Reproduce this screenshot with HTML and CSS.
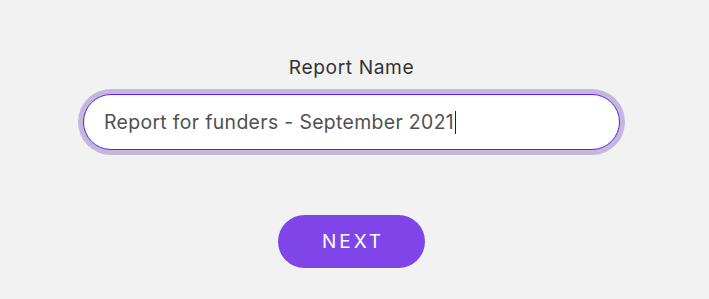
FILE: index.html
```html
<!DOCTYPE html>
<html lang="en">
<head>
<meta charset="utf-8">
<title>Report Name</title>
<link rel="stylesheet" href="styles.css">
</head>
<body>
<main class="page">
  <form class="form">
    <label class="label" for="report-name">Report Name</label>
    <div class="field" id="report-name" role="textbox">Report for funders - September 2021<span class="caret"></span></div>
    <button type="button" class="next">NEXT</button>
  </form>
</main>
</body>
</html>
```
FILE: styles.css
```css
* { box-sizing: border-box; }
html, body { margin: 0; padding: 0; }
body {
  background: #f2f2f2;
  font-family: Inter, "Noto Sans", sans-serif;
  width: 703px;
  height: 299px;
}
.page {
  display: flex;
  justify-content: center;
  padding-top: 56px;
}
.form {
  display: flex;
  flex-direction: column;
  align-items: center;
}
.label {
  font-size: 19.2px;
  color: #333333;
  line-height: 22px;
  letter-spacing: 0.6px;
  margin-bottom: 16px;
}
.field {
  width: 537px;
  height: 56px;
  background: #ffffff;
  border: 1.5px solid #5a1ff0;
  border-radius: 28px;
  box-shadow: 0 0 0 5px #c3b7dc;
  padding: 0 20px;
  display: flex;
  align-items: center;
  font-size: 19.4px;
  letter-spacing: 0.35px;
  color: #505050;
}
.caret {
  display: inline-block;
  width: 1px;
  height: 23px;
  background: #222;
  margin-left: 1px;
}
.next {
  margin-top: 65px;
  width: 147px;
  height: 53px;
  border: none;
  border-radius: 27px;
  background: #7f45e9;
  color: #ffffff;
  font-family: Inter, "Noto Sans", sans-serif;
  font-size: 19px;
  letter-spacing: 3px;
  padding: 0 0 0 3px;
}
```
